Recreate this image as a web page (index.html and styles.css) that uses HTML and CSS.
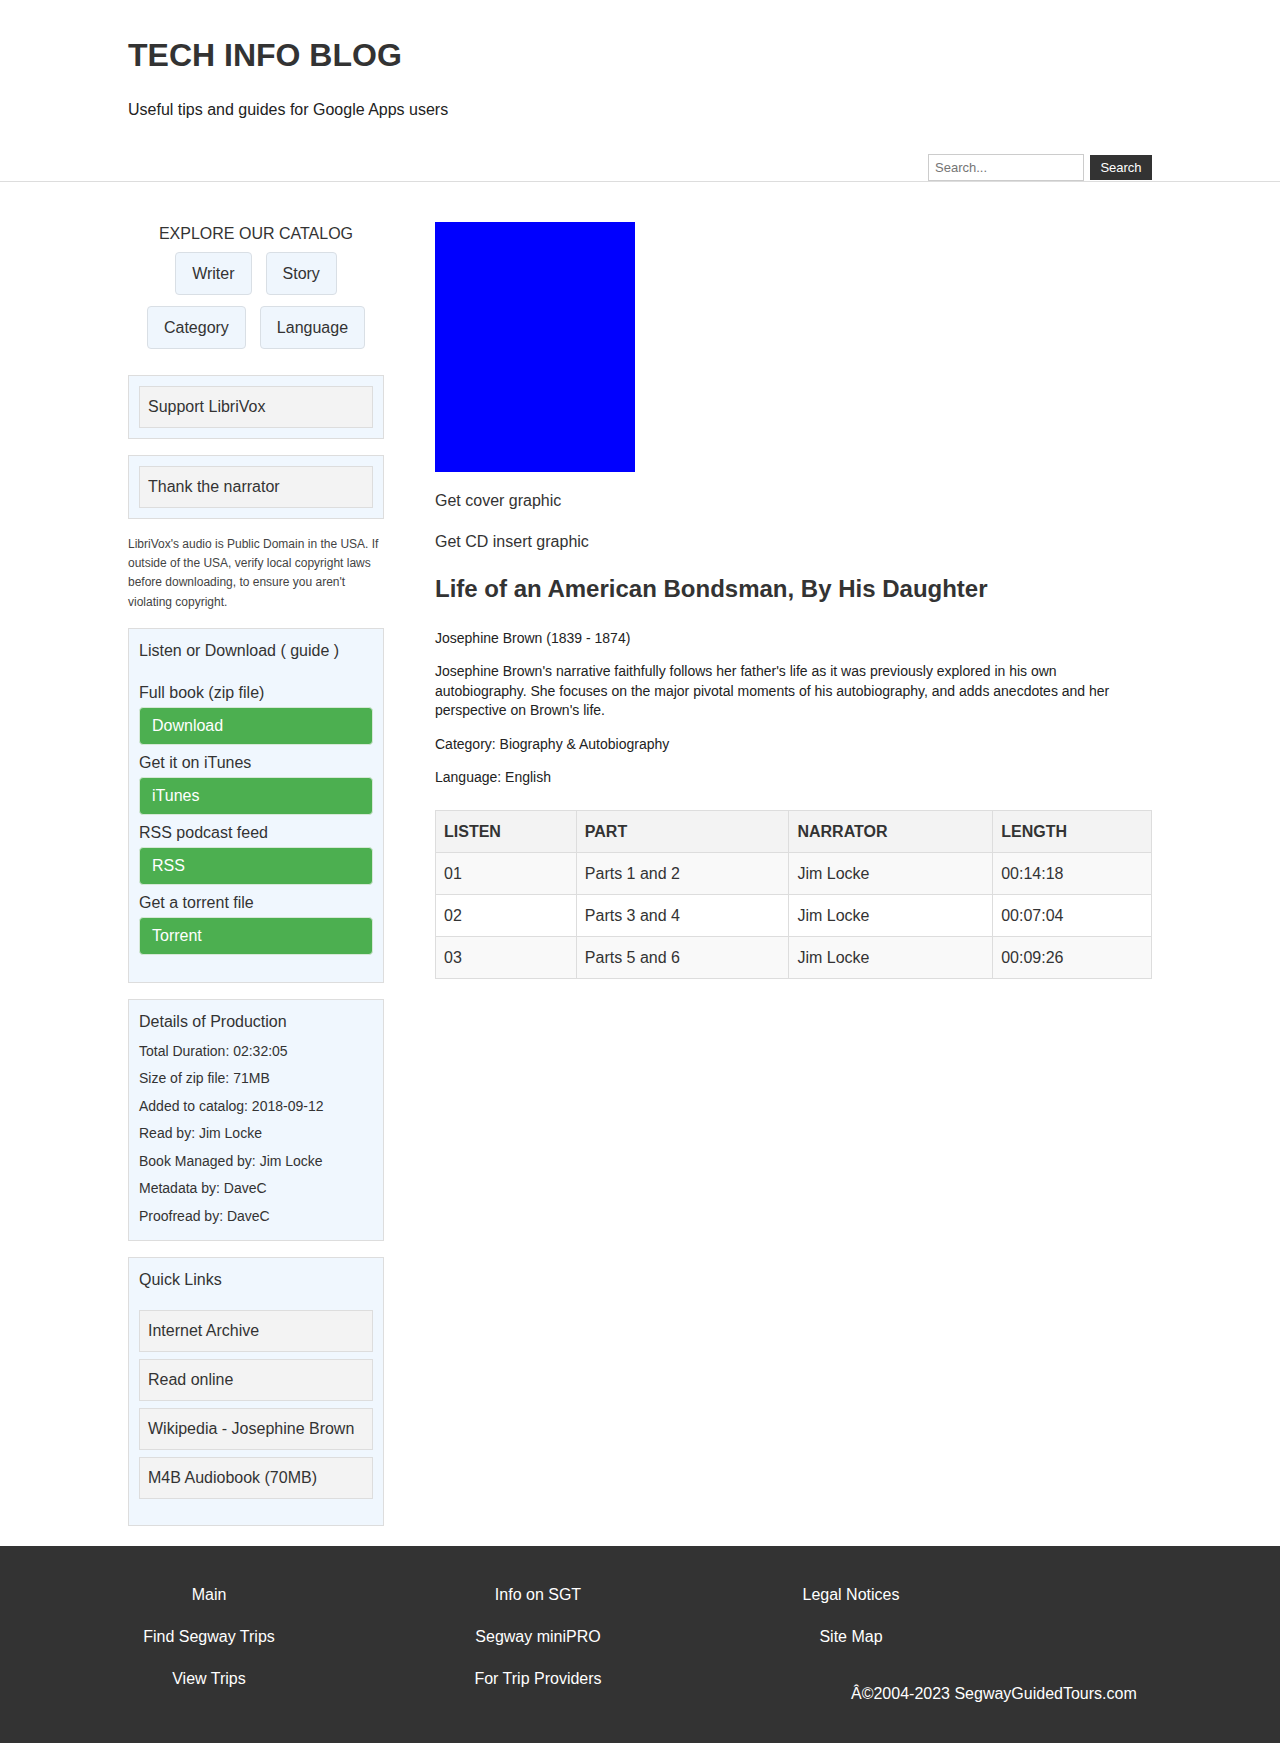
FILE: index.html
```html
<!DOCTYPE html>
<html lang="en">
<head>
<meta charset="utf-8">
<title>Tech Info Blog</title>
<link rel="stylesheet" href="styles.css">
</head>
<body>
<header class="site-header">
  <div class="container">
    <h1 class="site-title">TECH INFO BLOG</h1>
    <p class="site-tagline">Useful tips and guides for Google Apps users</p>
    <form class="search">
      <input class="search-input" type="text" placeholder="Search...">
      <button class="search-btn" type="button">Search</button>
    </form>
  </div>
</header>

<div class="container page">
  <aside class="sidebar">
    <div class="catalog">
      <h3 class="catalog-title">EXPLORE OUR CATALOG</h3>
      <div class="catalog-links">
        <a class="catalog-btn" href="#">Writer</a>
        <a class="catalog-btn" href="#">Story</a>
        <a class="catalog-btn" href="#">Category</a>
        <a class="catalog-btn" href="#">Language</a>
      </div>
    </div>

    <div class="side-box first-box"><a class="side-link" href="#">Support LibriVox</a></div>
    <div class="side-box"><a class="side-link" href="#">Thank the narrator</a></div>

    <p class="side-note">LibriVox's audio is Public Domain in the USA. If outside of the USA, verify local copyright laws before downloading, to ensure you aren't violating copyright.</p>

    <div class="side-box listen">
      <h4 class="panel-title listen-title">Listen or Download ( guide )</h4>
      <div class="dl-group">
        <div class="dl-label">Full book (zip file)</div>
        <a class="dl-btn" href="#">Download</a>
      </div>
      <div class="dl-group">
        <div class="dl-label">Get it on iTunes</div>
        <a class="dl-btn" href="#">iTunes</a>
      </div>
      <div class="dl-group">
        <div class="dl-label">RSS podcast feed</div>
        <a class="dl-btn" href="#">RSS</a>
      </div>
      <div class="dl-group">
        <div class="dl-label">Get a torrent file</div>
        <a class="dl-btn" href="#">Torrent</a>
      </div>
    </div>

    <div class="side-box details">
      <h4 class="panel-title">Details of Production</h4>
      <p class="detail">Total Duration: 02:32:05</p>
      <p class="detail">Size of zip file: 71MB</p>
      <p class="detail">Added to catalog: 2018-09-12</p>
      <p class="detail">Read by: Jim Locke</p>
      <p class="detail">Book Managed by: Jim Locke</p>
      <p class="detail">Metadata by: DaveC</p>
      <p class="detail">Proofread by: DaveC</p>
    </div>

    <div class="side-box quick">
      <h4 class="panel-title">Quick Links</h4>
      <ul class="quick-list">
        <li><a class="side-link" href="#">Internet Archive</a></li>
        <li><a class="side-link" href="#">Read online</a></li>
        <li><a class="side-link" href="#">Wikipedia - Josephine Brown</a></li>
        <li><a class="side-link" href="#">M4B Audiobook (70MB)</a></li>
      </ul>
    </div>
  </aside>

  <main class="content">
    <div class="cover"></div>
    <p class="graphic-link"><a href="#">Get cover graphic</a></p>
    <p class="graphic-link"><a href="#">Get CD insert graphic</a></p>

    <h2 class="book-title">Life of an American Bondsman, By His Daughter</h2>
    <p class="meta">Josephine Brown (1839 - 1874)</p>
    <p class="meta">Josephine Brown's narrative faithfully follows her father's life as it was previously explored in his own autobiography. She focuses on the major pivotal moments of his autobiography, and adds anecdotes and her perspective on Brown's life.</p>
    <p class="meta">Category: Biography &amp; Autobiography</p>
    <p class="meta">Language: English</p>

    <table class="chapters">
      <thead>
        <tr>
          <th class="col-listen">LISTEN</th>
          <th class="col-part">PART</th>
          <th class="col-narrator">NARRATOR</th>
          <th class="col-length">LENGTH</th>
        </tr>
      </thead>
      <tbody>
        <tr><td>01</td><td>Parts 1 and 2</td><td>Jim Locke</td><td>00:14:18</td></tr>
        <tr><td>02</td><td>Parts 3 and 4</td><td>Jim Locke</td><td>00:07:04</td></tr>
        <tr><td>03</td><td>Parts 5 and 6</td><td>Jim Locke</td><td>00:09:26</td></tr>
      </tbody>
    </table>
  </main>
</div>

<footer class="site-footer">
  <div class="container footer-inner">
    <div class="fcol fcol1">
      <a class="flink" href="#">Main</a>
      <a class="flink" href="#">Find Segway Trips</a>
      <a class="flink" href="#">View Trips</a>
    </div>
    <div class="fcol fcol2">
      <a class="flink" href="#">Info on SGT</a>
      <a class="flink" href="#">Segway miniPRO</a>
      <a class="flink" href="#">For Trip Providers</a>
    </div>
    <div class="fcol fcol3">
      <a class="flink" href="#">Legal Notices</a>
      <a class="flink" href="#">Site Map</a>
      <p class="copyright">Â©2004-2023 SegwayGuidedTours.com</p>
    </div>
  </div>
</footer>
</body>
</html>
```

FILE: styles.css
```css
* { box-sizing: border-box; }

body {
  margin: 0;
  font-family: "Liberation Sans", Arial, Helvetica, sans-serif;
  color: #333;
  background: #fff;
}

a { color: inherit; text-decoration: none; }

.container {
  width: 1024px;
  margin: 0 auto;
}

/* Header */
.site-header {
  border-bottom: 1px solid #ddd;
  padding-top: 37px;
}
.site-title {
  margin: 0;
  font-size: 32px;
  line-height: 37px;
  font-weight: bold;
  color: #333;
}
.site-tagline {
  margin: 26px 0 0;
  font-size: 16px;
  line-height: 19px;
  color: #222;
}
.search {
  margin: 35px 0 0;
  display: flex;
  justify-content: flex-end;
  align-items: center;
  gap: 6px;
  height: 27px;
}
.search-input {
  width: 156px;
  height: 27px;
  border: 1px solid #ccc;
  padding: 0 6px;
  font-family: inherit;
  font-size: 13px;
  color: #333;
  margin: 0;
}
.search-input::placeholder { color: #757575; }
.search-btn {
  width: 62px;
  height: 25px;
  margin: 0;
  border: 0;
  background: #333;
  color: #fff;
  font-family: inherit;
  font-size: 13px;
  padding: 0;
}

/* Page layout */
.page {
  display: flex;
  gap: 51px;
  padding: 40px 0 20px;
  align-items: flex-start;
}
.sidebar {
  width: 256px;
  flex: 0 0 256px;
}
.content {
  flex: 1 1 auto;
  min-width: 0;
}

/* Catalog */
.catalog-title {
  margin: 2px 0 8px;
  font-size: 16px;
  line-height: 20px;
  font-weight: normal;
  text-align: center;
  color: #333;
}
.catalog-links {
  display: flex;
  flex-wrap: wrap;
  justify-content: center;
  column-gap: 14px;
  row-gap: 11px;
}
.catalog-btn {
  display: block;
  padding: 11px 16px;
  line-height: 19px;
  font-size: 16px;
  border: 1px solid #d9dfe5;
  border-radius: 4px;
  background: #eff6fd;
  color: #333;
}

/* Side boxes */
.side-box {
  border: 1px solid #ddd;
  background: #f0f7fe;
  padding: 10px;
  margin-bottom: 16px;
}
.first-box { margin-top: 26px; }
.side-link {
  display: block;
  background: #f3f3f3;
  border: 1px solid #ddd;
  padding: 11px 8px;
  line-height: 18px;
  font-size: 16px;
  color: #333;
}
.side-note {
  margin: 0 0 16px;
  font-size: 12px;
  line-height: 19.2px;
  color: #444;
}

.panel-title {
  margin: 0;
  font-size: 16px;
  line-height: 24px;
  font-weight: normal;
  color: #333;
}

/* Listen */
.listen { padding-bottom: 19px; }
.listen-title { margin-bottom: 20px; }
.dl-group { margin-bottom: 8px; }
.dl-label {
  font-size: 16px;
  line-height: 20px;
  margin-bottom: 4px;
  color: #333;
}
.dl-btn {
  display: block;
  background: #4caf50;
  color: #fff;
  border: 1px solid #d5e8d6;
  border-radius: 4px;
  padding: 8px 12px;
  line-height: 20px;
  font-size: 16px;
}

/* Details */
.details { padding-bottom: 14px; }
.detail {
  margin: 8px 0 0;
  font-size: 14px;
  line-height: 19.5px;
  color: #333;
}

/* Quick links */
.quick {
  padding-bottom: 26px;
  margin-bottom: 0;
}
.quick-list {
  list-style: none;
  margin: 18px 0 0;
  padding: 0;
  display: flex;
  flex-direction: column;
  gap: 7px;
}

/* Main content */
.cover {
  width: 200px;
  height: 250px;
  background: #0000ff;
}
.graphic-link {
  margin: 16px 0;
  font-size: 16px;
  line-height: 25px;
  color: #333;
}
.book-title {
  margin: 21px 0 25px;
  font-size: 24px;
  line-height: 28.8px;
  font-weight: bold;
  color: #333;
}
.meta {
  margin: 14px 0;
  font-size: 14px;
  line-height: 19.5px;
  color: #222;
}

.chapters {
  width: 100%;
  border-collapse: collapse;
  margin-top: 22px;
  font-size: 16px;
}
.chapters th,
.chapters td {
  border: 1px solid #ddd;
  padding: 12px 8px;
  line-height: 17px;
  text-align: left;
  color: #333;
}
.chapters th {
  background: #f3f3f3;
  font-weight: bold;
}
.chapters tbody tr:nth-child(odd) td { background: #f9f9f9; }
.chapters tbody tr:nth-child(even) td { background: #fff; }
.col-listen { width: 141px; }
.col-part { width: 213px; }
.col-narrator { width: 204px; }
.col-length { width: 159px; }

/* Footer */
.site-footer {
  background: #333;
  color: #fff;
  padding: 40px 0;
}
.footer-inner {
  display: flex;
  align-items: flex-start;
}
.fcol {
  display: flex;
  flex-direction: column;
  text-align: center;
}
.fcol1 { width: 162px; }
.fcol2 { width: 176px; margin-left: 160px; }
.fcol3 { width: 182px; margin-left: 134px; }
.flink {
  display: block;
  color: #fff;
  font-size: 16px;
  line-height: 18px;
  margin-bottom: 24px;
}
.flink:last-child { margin-bottom: 0; }
.copyright {
  margin: 15px 0 0;
  padding-left: 91px;
  text-align: left;
  white-space: nowrap;
  font-size: 16px;
  line-height: 18px;
  color: #fff;
}
```
